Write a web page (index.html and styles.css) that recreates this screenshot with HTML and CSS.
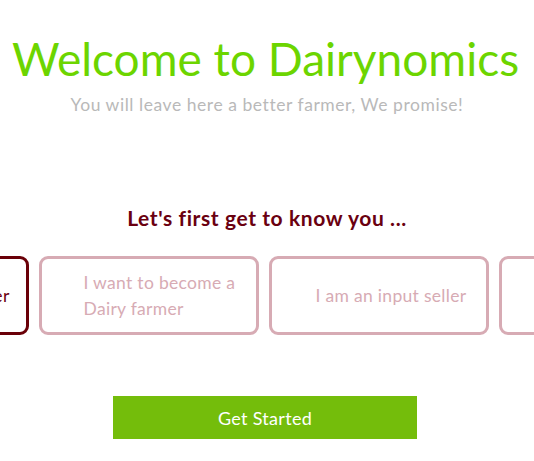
FILE: index.html
```html
<!DOCTYPE html>
<html lang="en">
<head>
<meta charset="utf-8">
<title>Dairynomics</title>
<link rel="stylesheet" href="styles.css">
</head>
<body>
<main class="page">
  <header class="intro">
    <h1 class="title">Welcome to Dairynomics</h1>
    <p class="subtitle">You will leave here a better farmer, We promise!</p>
  </header>
  <section class="roles">
    <h2 class="roles-heading">Let's first get to know you ...</h2>
    <div class="carousel">
      <div class="track">
        <div class="card card-selected"><span class="card-text">I am a Dairy farmer</span></div>
        <div class="card"><span class="card-text">I want to become a Dairy farmer</span></div>
        <div class="card"><span class="card-text">I am an input seller</span></div>
        <div class="card"><span class="card-text">I am a service provider</span></div>
      </div>
    </div>
  </section>
  <div class="actions">
    <button class="start-btn" type="button">Get Started</button>
  </div>
</main>
</body>
</html>
```
FILE: styles.css
```css
* { box-sizing: border-box; }
html, body { margin: 0; padding: 0; background: #fff; }
body {
  font-family: Lato, "Open Sans", sans-serif;
  overflow: hidden;
}
.page {
  width: 534px;
  padding-top: 30px;
}
.intro { text-align: center; }
.title {
  margin: 0;
  font-size: 46px;
  font-weight: 400;
  line-height: 58px;
  color: #6cd500;
  letter-spacing: 0;
  padding-right: 3px;
}
.subtitle {
  margin: 6px 0 0;
  font-size: 17.5px;
  line-height: 22px;
  color: #b9b9b9;
  letter-spacing: 0.55px;
}
.roles {
  margin-top: 89px;
}
.roles-heading {
  margin: 0;
  text-align: center;
  font-size: 21px;
  font-weight: 700;
  line-height: 26px;
  color: #6a0010;
  letter-spacing: 0.6px;
}
.carousel {
  margin-top: 25px;
  overflow: hidden;
  width: 534px;
}
.track {
  display: flex;
  gap: 10px;
  margin-left: -191px;
  width: max-content;
}
.card {
  flex: 0 0 220px;
  height: 79px;
  border: 3px solid #d7abb4;
  border-radius: 9px;
  display: flex;
  align-items: center;
  justify-content: center;
  padding: 0 0 0 24px;
  color: #d7abb4;
  font-size: 17.5px;
  line-height: 26px;
  letter-spacing: 0.3px;
}
.card-text {
  max-width: 155px;
  text-align: left;
}
.card-selected {
  border-color: #6a0008;
  color: #6a0010;
}
.card-selected .card-text {
  max-width: none;
  white-space: nowrap;
  letter-spacing: 0.6px;
}
.actions {
  margin-top: 61px;
  display: flex;
  justify-content: center;
  padding-right: 4px;
}
.start-btn {
  width: 304px;
  height: 43px;
  border: 0;
  border-radius: 0;
  background: #74bd0b;
  color: #fff;
  font-family: inherit;
  font-size: 18px;
  letter-spacing: 0.3px;
  cursor: pointer;
}
```
